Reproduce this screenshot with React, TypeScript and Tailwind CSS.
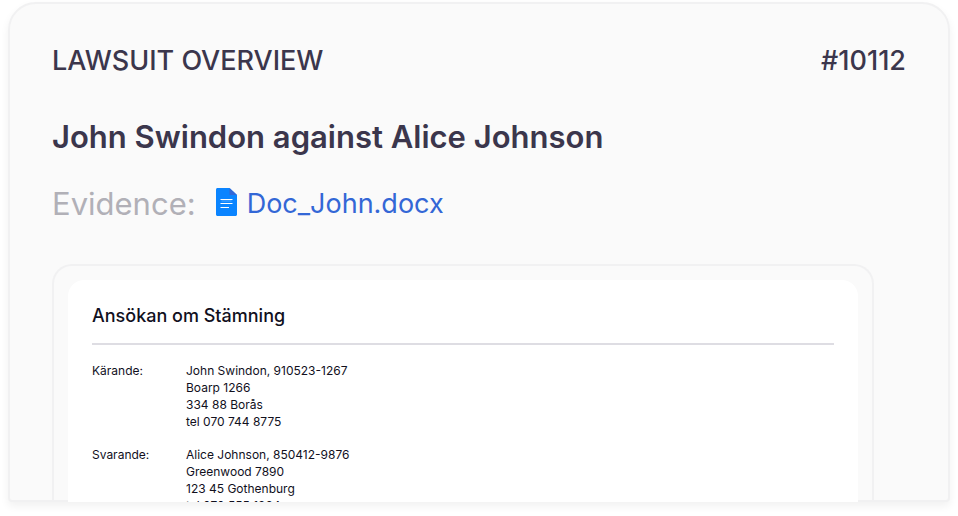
type Party = {
  role: string;
  lines: string[];
};

const parties: Party[] = [
  {
    role: "Kärande:",
    lines: ["John Swindon, 910523-1267", "Boarp 1266", "334 88 Borås", "tel 070 744 8775"],
  },
  {
    role: "Svarande:",
    lines: ["Alice Johnson, 850412-9876", "Greenwood 7890", "123 45 Gothenburg", "tel 070 555 1234"],
  },
];

const DocIcon = () => (
  <svg width="21" height="28" viewBox="0 0 21 28" aria-hidden="true">
    <path d="M1.5 0H13.5L21 7V26.5C21 27.3 20.3 28 19.5 28H1.5C.7 28 0 27.3 0 26.5V1.5C0 .7.7 0 1.5 0Z" fill="#0a84ff" />
    <path d="M13.5 0L21 7H13.5Z" fill="#3367d6" />
    <path d="M4.5 11.5H16.5M4.5 15.5H16.5M4.5 19.5H13" stroke="#fff" strokeWidth="1.2" />
    <path d="M5.5 13H15.5" stroke="#fff" strokeOpacity="0.3" />
  </svg>
);

const DocumentPreview = () => (
  <div className="mr-8 mt-10 rounded-t-[20px] border-2 border-b-0 border-[#f1f1f2] px-[14px] pt-[14px]">
    <article className="-mb-[2px] max-h-[222px] overflow-hidden rounded-t-2xl bg-white px-6 pt-6 text-[#11101d]">
      <h3 className="border-b-2 border-[#dedde3] pb-[15px] text-lg leading-6 font-medium">
        Ansökan om Stämning
      </h3>
      <dl className="mt-[17px] grid grid-cols-[94px_1fr] gap-y-4 text-xs leading-[17px]">
        {parties.map((party) => (
          <div key={party.role} className="contents">
            <dt>{party.role}</dt>
            <dd>
              {party.lines.map((line) => (
                <p key={line}>{line}</p>
              ))}
            </dd>
          </div>
        ))}
      </dl>
    </article>
  </div>
);

const App = () => {
  return (
    <main className="bg-white px-2 pt-[2px] pb-[14px] font-['Inter',sans-serif]">
      <section className="rounded-t-[28px] rounded-b-sm border-2 border-[#f1f1f2] bg-[#fafafa] px-[42px] pt-[41px] text-[#3b364c] shadow-[0_4px_8px_rgba(0,0,0,0.06)]">
        <header className="flex items-center justify-between text-[27px] leading-8 font-medium">
          <h1>LAWSUIT OVERVIEW</h1>
          <span>#10112</span>
        </header>
        <h2 className="mt-10 text-[31px] leading-10 font-semibold">John Swindon against Alice Johnson</h2>
        <div className="mt-[27px] flex items-center text-[31px] leading-10">
          <span className="text-[#b1b0b7]">Evidence:</span>
          <a href="#doc" className="ml-5 flex items-start gap-[10px] text-[27px] text-[#3367d6]">
            <span className="pt-1">
              <DocIcon />
            </span>
            Doc_John.docx
          </a>
        </div>
        <DocumentPreview />
      </section>
    </main>
  );
};

export default App;
